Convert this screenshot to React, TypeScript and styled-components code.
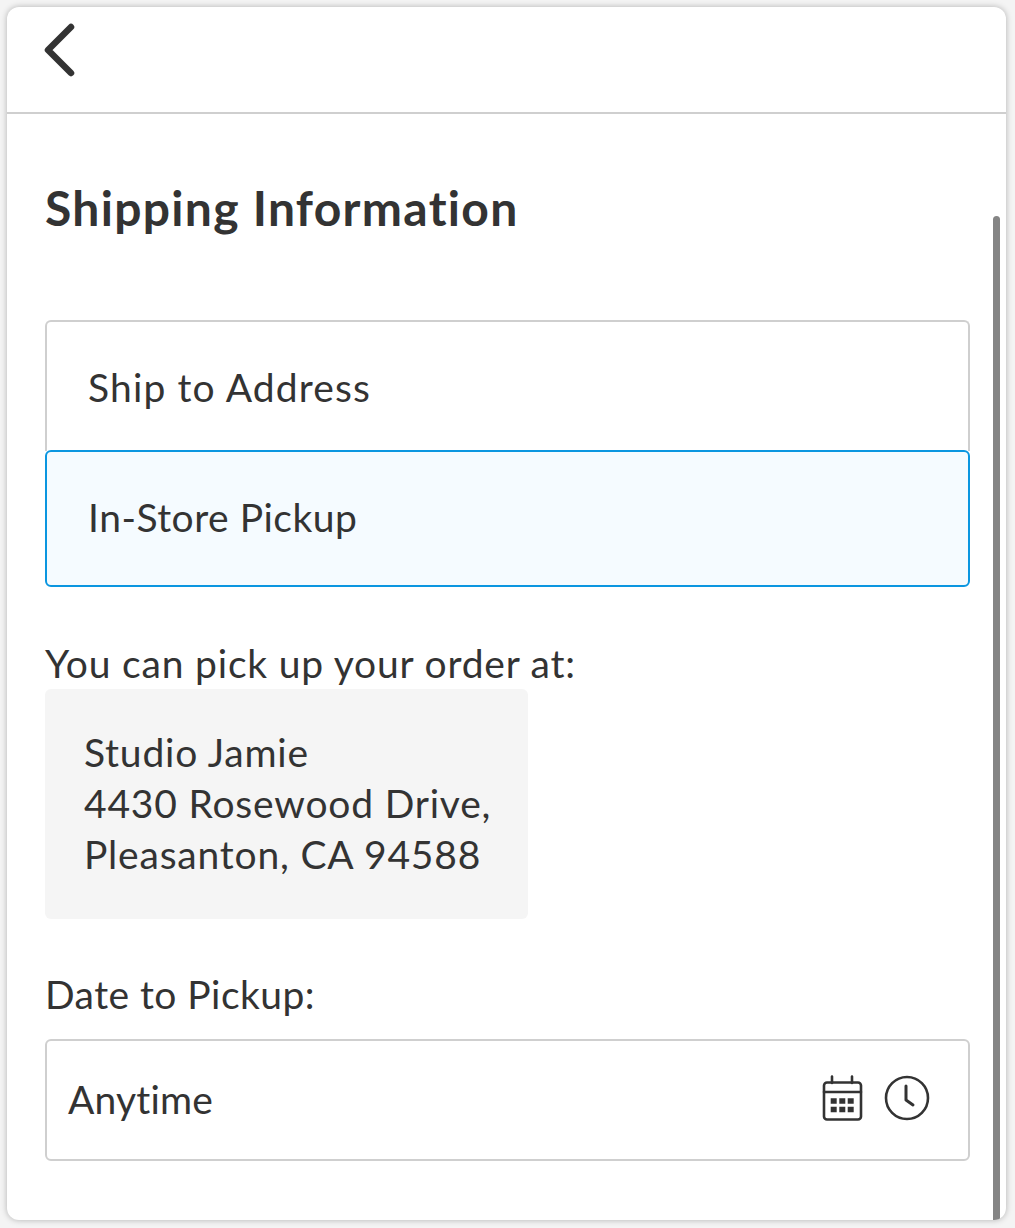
import { FC } from 'react';
import styled, { createGlobalStyle } from 'styled-components';

const GlobalStyle = createGlobalStyle`
  html, body {
    margin: 0;
    padding: 0;
    background: #f4f4f4;
  }
  body {
    font-family: 'Lato', 'Liberation Sans', sans-serif;
    font-variant-ligatures: none;
    color: #333;
  }
`;

const BackIcon: FC = () => (
  <svg width="34" height="54" viewBox="0 0 34 54" fill="none">
    <path d="M29 4 L6 27 L29 50" stroke="#333" strokeWidth="6.5" strokeLinecap="round" strokeLinejoin="round" />
  </svg>
);

const CalendarIcon: FC = () => (
  <svg width="42" height="46" viewBox="0 0 42 46" fill="none">
    <rect x="3" y="7.5" width="37" height="37" rx="3" stroke="#333" strokeWidth="2.6" />
    <path d="M3 17 H40 M11 1.5 V8 M31 1.5 V8" stroke="#333" strokeWidth="2.6" strokeLinecap="round" />
    <path
      d="M9.7 23.3h6v5.5h-6z M18.3 23.3h6v5.5h-6z M26.7 23.3h6v5.5h-6z M9.7 31.7h6v5.5h-6z M18.3 31.7h6v5.5h-6z M26.7 31.7h6v5.5h-6z"
      fill="#333"
    />
  </svg>
);

const ClockIcon: FC = () => (
  <svg width="46" height="46" viewBox="0 0 46 46" fill="none">
    <circle cx="23" cy="23" r="21" stroke="#333" strokeWidth="2.6" />
    <path d="M22 11 V25 L29 30" stroke="#333" strokeWidth="3" strokeLinecap="round" strokeLinejoin="round" />
  </svg>
);

export default function App() {
  return (
    <>
      <GlobalStyle />
      <Page>
        <Card>
          <Header>
            <BackButton>
              <BackIcon />
            </BackButton>
          </Header>
          <Content>
            <Title>Shipping Information</Title>
            <Options>
              <Option tracking={1.15}>Ship to Address</Option>
              <Option selected tracking={0.5}>
                In-Store Pickup
              </Option>
            </Options>
            <Label>You can pick up your order at:</Label>
            <AddressBox>
              <div>Studio Jamie</div>
              <div>4430 Rosewood Drive,</div>
              <div>Pleasanton, CA 94588</div>
            </AddressBox>
            <DateLabel>Date to Pickup:</DateLabel>
            <DateField>
              <DateValue>Anytime</DateValue>
              <FieldIcons>
                <CalendarIcon />
                <ClockIcon />
              </FieldIcons>
            </DateField>
          </Content>
          <ScrollThumb />
        </Card>
      </Page>
    </>
  );
}

const Page = styled.div`
  box-sizing: border-box;
  width: 1015px;
  height: 1228px;
  padding: 7px 9px 8px 7px;
  overflow: hidden;
`;

const Card = styled.div`
  position: relative;
  height: 100%;
  background: #fff;
  border-radius: 12px;
  box-shadow: 0 0 6px rgba(0, 0, 0, 0.28);
  overflow: hidden;
`;

const Header = styled.div`
  box-sizing: border-box;
  height: 107px;
  padding: 16px 0 0 35px;
  border-bottom: 2px solid #cfcfcf;
`;

const BackButton = styled.div`
  display: block;
  width: 34px;
  height: 54px;
`;

const Content = styled.div`
  padding: 0 36px 0 38px;
`;

const Title = styled.h1`
  margin: 66px 0 0 0;
  padding-bottom: 1px;
  font-size: 48px;
  line-height: 56px;
  font-weight: 700;
  letter-spacing: 1.3px;
  color: #333;
`;

const Options = styled.div`
  display: flex;
  flex-direction: column;
  margin-top: 83px;
`;

const Option = styled.div<{ selected?: boolean; tracking: number }>`
  box-sizing: border-box;
  height: ${(p) => (p.selected ? '137px' : '131px')};
  margin-top: ${(p) => (p.selected ? '-1px' : '0')};
  padding-left: 41px;
  padding-bottom: ${(p) => (p.selected ? '4px' : '0')};
  display: flex;
  align-items: center;
  font-size: 39px;
  letter-spacing: ${(p) => p.tracking}px;
  color: #333;
  background: ${(p) => (p.selected ? '#f5fbff' : '#fff')};
  border: 2px solid ${(p) => (p.selected ? '#0b96e0' : '#cfcfcf')};
  border-bottom-width: ${(p) => (p.selected ? '2px' : '0')};
  border-radius: ${(p) => (p.selected ? '6px' : '6px 6px 0 0')};
`;

const Label = styled.div`
  margin-top: 53px;
  font-size: 39px;
  line-height: 46px;
  letter-spacing: 0.8px;
  color: #333;
`;

const AddressBox = styled.div`
  box-sizing: border-box;
  width: 483px;
  height: 230px;
  padding: 38px 0 0 39px;
  margin-top: 3px;
  background: #f5f5f5;
  border-radius: 6px;
  font-size: 39px;
  line-height: 51px;
  letter-spacing: 0.8px;
  color: #333;
`;

const DateLabel = styled(Label)`
  margin-top: 52px;
  margin-bottom: 22px;
  letter-spacing: 0.45px;
`;

const DateField = styled.div`
  box-sizing: border-box;
  height: 122px;
  padding: 0 38px 0 21px;
  display: flex;
  align-items: center;
  justify-content: space-between;
  border: 2px solid #cfcfcf;
  border-radius: 6px;
`;

const DateValue = styled.span`
  padding-bottom: 2px;
  font-size: 39px;
  letter-spacing: 0.2px;
  color: #333;
`;

const FieldIcons = styled.div`
  display: flex;
  align-items: center;
  gap: 21px;
  margin-bottom: 4px;
`;

const ScrollThumb = styled.div`
  position: absolute;
  top: 209px;
  right: 6px;
  bottom: 0;
  width: 7px;
  background: #858585;
  border-radius: 4px 4px 0 0;
`;
